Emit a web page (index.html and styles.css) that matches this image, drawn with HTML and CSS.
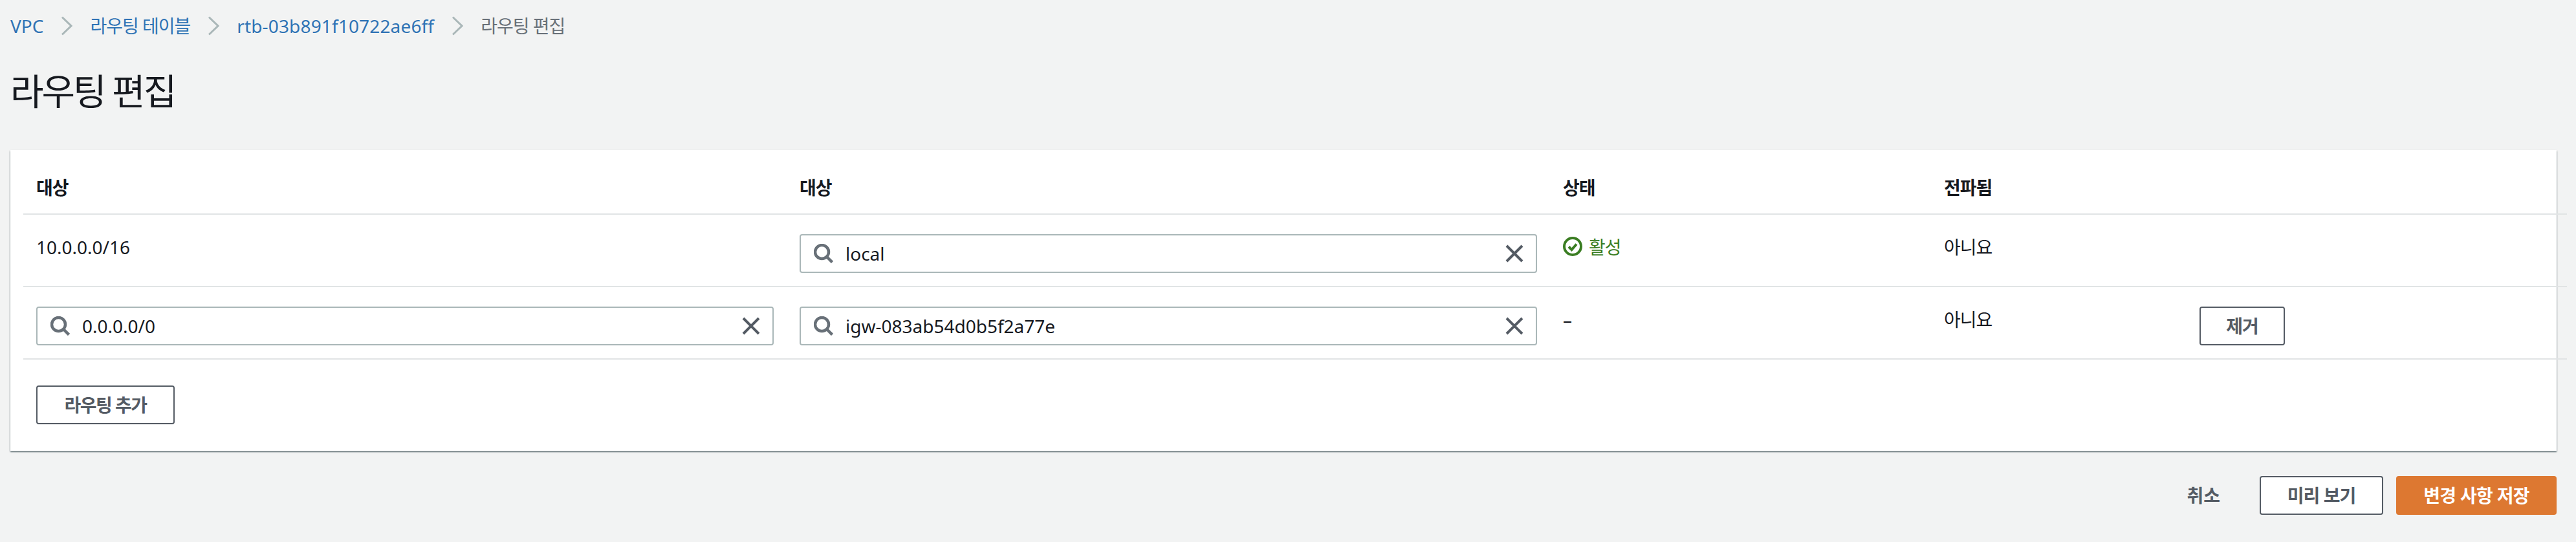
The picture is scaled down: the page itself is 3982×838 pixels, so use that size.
FILE: index.html
```html
<!DOCTYPE html>
<html lang="ko">
<head>
    <meta charset="UTF-8">
    <meta name="viewport" content="width=device-width, initial-scale=1.0">
    <title>라우팅 편집</title>
    <link rel="stylesheet" href="styles.css">
</head>
<body>

    <!-- Breadcrumbs -->
    <nav class="breadcrumbs">
        <a href="#">VPC</a>
        <svg class="crumb-sep" viewBox="0 0 18 30"><path d="M2 1.500 16 15 2 28.500"/></svg>
        <a class="ko" href="#">라우팅 테이블</a>
        <svg class="crumb-sep" viewBox="0 0 18 30"><path d="M2 1.500 16 15 2 28.500"/></svg>
        <a class="crumb-id" href="#">rtb-03b891f10722ae6ff</a>
        <svg class="crumb-sep" viewBox="0 0 18 30"><path d="M2 1.500 16 15 2 28.500"/></svg>
        <span class="ko">라우팅 편집</span>
    </nav>

    <h1 class="page-title">라우팅 편집</h1>

    <!-- Routes -->
    <section class="card">
        <div class="row head-row">
            <div class="cell ko">대상</div>
            <div class="cell ko">대상</div>
            <div class="cell ko">상태</div>
            <div class="cell ko">전파됨</div>
            <div class="cell"></div>
        </div>

        <div class="row">
            <div class="cell">10.0.0.0/16</div>
            <div class="cell">
                <div class="search-input">
                    <svg class="icon-search" viewBox="0 0 30 30"><circle cx="12.500" cy="12.500" r="10.500"/><path d="M20 20 28.500 28.500"/></svg>
                    <span class="search-value">local</span>
                    <svg class="icon-clear" viewBox="0 0 28 28"><path d="M2 2 26 26M26 2 2 26"/></svg>
                </div>
            </div>
            <div class="cell status-active">
                <svg class="icon-check" viewBox="0 0 30 30"><circle cx="15" cy="15" r="13"/><path d="M9 15.500 13.500 20 21 11.500"/></svg>
                활성
            </div>
            <div class="cell ko">아니요</div>
            <div class="cell"></div>
        </div>

        <div class="row">
            <div class="cell">
                <div class="search-input">
                    <svg class="icon-search" viewBox="0 0 30 30"><circle cx="12.500" cy="12.500" r="10.500"/><path d="M20 20 28.500 28.500"/></svg>
                    <span class="search-value">0.0.0.0/0</span>
                    <svg class="icon-clear" viewBox="0 0 28 28"><path d="M2 2 26 26M26 2 2 26"/></svg>
                </div>
            </div>
            <div class="cell">
                <div class="search-input">
                    <svg class="icon-search" viewBox="0 0 30 30"><circle cx="12.500" cy="12.500" r="10.500"/><path d="M20 20 28.500 28.500"/></svg>
                    <span class="search-value">igw-083ab54d0b5f2a77e</span>
                    <svg class="icon-clear" viewBox="0 0 28 28"><path d="M2 2 26 26M26 2 2 26"/></svg>
                </div>
            </div>
            <div class="cell">–</div>
            <div class="cell ko">아니요</div>
            <div class="cell"><button class="btn btn-remove">제거</button></div>
        </div>

        <div class="card-footer">
            <button class="btn btn-add">라우팅 추가</button>
        </div>
    </section>

    <!-- Actions -->
    <div class="actions">
        <button class="btn-link">취소</button>
        <button class="btn btn-preview">미리 보기</button>
        <button class="btn btn-primary">변경 사항 저장</button>
    </div>

</body>
</html>
```

FILE: styles.css
```css
* {
    box-sizing: border-box;
}

body {
    margin: 0;
    padding: 25px 30px 0 16px;
    min-height: 838px;
    background-color: #f2f3f3;
    color: #16191f;
    font-family: "Noto Sans", "Noto Sans CJK KR", sans-serif;
    font-size: 28px;
    line-height: 40px;
}

/* Hangul runs a little narrower in the original */
.ko {
    letter-spacing: -1px;
}

.breadcrumbs {
    display: flex;
    align-items: center;
    gap: 27px;
    height: 30px;
    color: #687078;
}

.breadcrumbs a {
    color: #2f73b5;
    text-decoration: none;
}

.crumb-id {
    letter-spacing: 0.15px;
}

.crumb-sep {
    width: 18px;
    height: 30px;
    fill: none;
    stroke: #aab7b8;
    stroke-width: 3;
}

.page-title {
    margin: 0;
    padding-top: 55px;
    font-size: 56px;
    font-weight: 400;
    line-height: 60px;
    letter-spacing: -3px;
}

.card {
    margin-top: 62px;
    padding-left: 20px;
    height: 465px;
    background-color: #fff;
    box-shadow: 0 2px 2px rgba(0, 28, 36, 0.45), 1px 1px 2px rgba(0, 28, 36, 0.15), -1px 1px 2px rgba(0, 28, 36, 0.15);
}

.row {
    display: grid;
    grid-template-columns: 1180px 1180px 589px 395px 1fr;
    margin-right: -16px;
    padding-top: 30px;
    padding-bottom: 20px;
    border-bottom: 2px solid #e1e4e5;
}

.head-row {
    padding-top: 38px;
    font-weight: 700;
}

.cell {
    display: flex;
    align-items: flex-start;
    padding: 0 20px;
}

.search-input {
    display: flex;
    align-items: center;
    width: 100%;
    height: 60px;
    padding: 0 19px 0 20px;
    background-color: #fff;
    border: 2px solid #aab7b8;
    border-radius: 4px;
}

.search-value {
    flex: 1;
    padding-left: 19px;
}

.icon-search {
    width: 30px;
    height: 30px;
    fill: none;
    stroke: #687078;
    stroke-width: 4.5;
}

.icon-clear {
    width: 28px;
    height: 28px;
    fill: none;
    stroke: #545b64;
    stroke-width: 4;
}

.status-active {
    gap: 10px;
    color: #3a7d22;
    letter-spacing: -1px;
}

.icon-check {
    width: 30px;
    height: 30px;
    margin-top: 4px;
    fill: none;
    stroke: #3a7d22;
    stroke-width: 4;
}

.btn {
    height: 60px;
    padding: 0;
    background-color: #fff;
    border: 2px solid #545b64;
    border-radius: 4px;
    color: #545b64;
    font: inherit;
    font-weight: 700;
    letter-spacing: -1px;
}

.btn-remove {
    width: 132px;
}

.card-footer {
    padding: 40px 20px;
}

.btn-add {
    width: 214px;
    letter-spacing: -1.5px;
}

.actions {
    display: flex;
    justify-content: flex-end;
    align-items: center;
    gap: 20px;
    margin-top: 39px;
}

.btn-link {
    margin-right: 41px;
    padding: 0;
    background: none;
    border: none;
    color: #545b64;
    font: inherit;
    font-weight: 700;
}

.btn-preview {
    width: 191px;
}

.btn-primary {
    width: 248px;
    background-color: #dd7831;
    border-color: #dd7831;
    color: #fff;
    letter-spacing: -0.7px;
}
```
